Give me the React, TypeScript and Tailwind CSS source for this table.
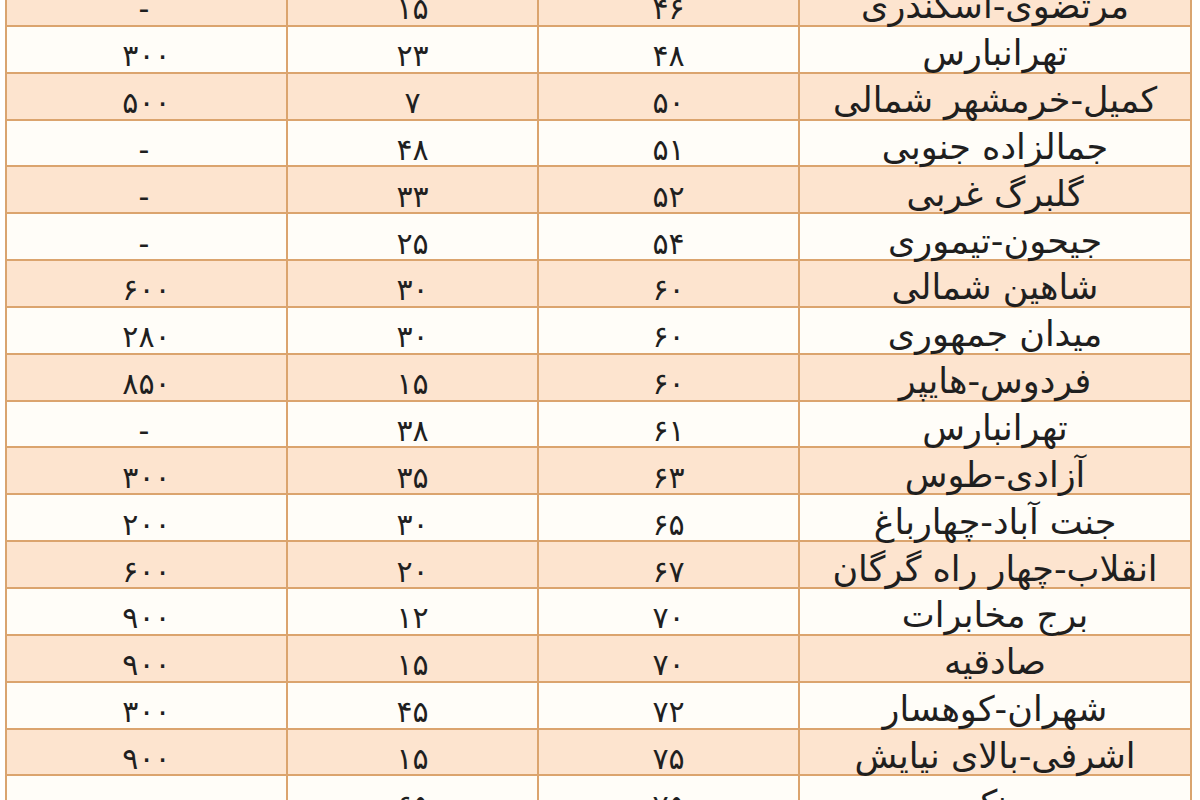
const rows: [string, string, string, string][] = [
  ['مرتضوی-اسکندری', '۴۶', '۱۵', '-'],
  ['تهرانبارس', '۴۸', '۲۳', '۳۰۰'],
  ['کمیل-خرمشهر شمالی', '۵۰', '۷', '۵۰۰'],
  ['جمالزاده جنوبی', '۵۱', '۴۸', '-'],
  ['گلبرگ غربی', '۵۲', '۳۳', '-'],
  ['جیحون-تیموری', '۵۴', '۲۵', '-'],
  ['شاهین شمالی', '۶۰', '۳۰', '۶۰۰'],
  ['میدان جمهوری', '۶۰', '۳۰', '۲۸۰'],
  ['فردوس-هایپر', '۶۰', '۱۵', '۸۵۰'],
  ['تهرانبارس', '۶۱', '۳۸', '-'],
  ['آزادی-طوس', '۶۳', '۳۵', '۳۰۰'],
  ['جنت آباد-چهارباغ', '۶۵', '۳۰', '۲۰۰'],
  ['انقلاب-چهار راه گرگان', '۶۷', '۲۰', '۶۰۰'],
  ['برج مخابرات', '۷۰', '۱۲', '۹۰۰'],
  ['صادقیه', '۷۰', '۱۵', '۹۰۰'],
  ['شهران-کوهسار', '۷۲', '۴۵', '۳۰۰'],
  ['اشرفی-بالای نیایش', '۷۵', '۱۵', '۹۰۰'],
  ['ونک', '۷۵', '۶۵', '-'],
];

export default function App() {
  return (
    <div className="h-[800px] w-[1200px] overflow-hidden bg-white">
      <div
        className="ml-[5px] -mt-[20px] w-[1187px] border-x-2 border-[#d9a470] text-[#1f1f1f]"
        style={{ fontFamily: '"DejaVu Sans", "Noto Sans", sans-serif' }}
      >
        {rows.map((row, i) => (
          <div
            key={i}
            className={`grid h-[46.85px] grid-cols-[281px_251px_261px_390px] border-b-2 border-[#dba46e] ${
              i % 2 === 0 ? 'bg-[#fde4cf]' : 'bg-[#fffdf8]'
            }`}
          >
            <div className="flex items-center justify-center border-r-2 border-[#dba46e] pt-[14px] text-[30px] leading-none tracking-[0.18em]" dir="rtl">
              {row[3]}
            </div>
            <div className="flex items-center justify-center border-r-2 border-[#dba46e] pt-[14px] text-[30px] leading-none tracking-[0.18em]" dir="rtl">
              {row[2]}
            </div>
            <div className="flex items-center justify-center border-r-2 border-[#dba46e] pt-[14px] text-[30px] leading-none tracking-[0.18em]" dir="rtl">
              {row[1]}
            </div>
            <div className="flex items-center justify-center pt-[9px] text-[35px] leading-none whitespace-nowrap" dir="rtl">
              {row[0]}
            </div>
          </div>
        ))}
      </div>
    </div>
  );
}
